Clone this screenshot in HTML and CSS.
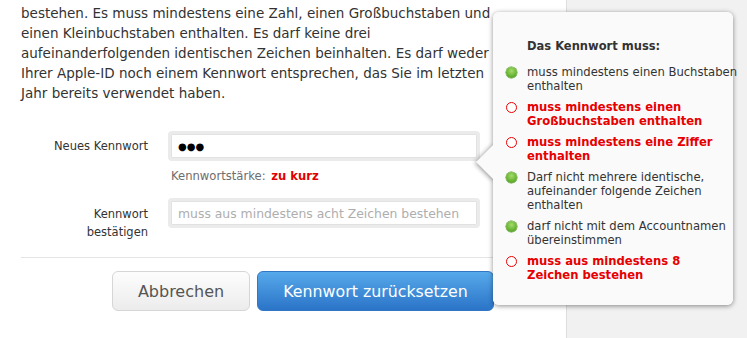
FILE: index.html
```html
<!DOCTYPE html>
<html lang="de">
<head>
<meta charset="utf-8">
<title>Kennwort zurücksetzen</title>
<link rel="stylesheet" href="styles.css">
</head>
<body>
<div class="page">
  <main class="main">
    <p class="intro">bestehen. Es muss mindestens eine Zahl, einen Großbuchstaben und<br>einen Kleinbuchstaben enthalten. Es darf keine drei<br>aufeinanderfolgenden identischen Zeichen beinhalten. Es darf weder<br>Ihrer Apple-ID noch einem Kennwort entsprechen, das Sie im letzten<br>Jahr bereits verwendet haben.</p>

    <div class="form">
      <div class="row row-new">
        <label class="label" for="pw">Neues Kennwort</label>
        <div class="field">
          <div class="input"><span class="dots">●●●</span></div>
          <div class="strength">Kennwortstärke: <b>zu kurz</b></div>
        </div>
      </div>
      <div class="row row-confirm">
        <label class="label" for="pw2">Kennwort<br>bestätigen</label>
        <div class="field">
          <div class="input"><span class="placeholder">muss aus mindestens acht Zeichen bestehen</span></div>
        </div>
      </div>
    </div>

    <div class="divider"></div>

    <div class="actions">
      <button class="btn btn-cancel">Abbrechen</button>
      <button class="btn btn-primary">Kennwort zurücksetzen</button>
    </div>
  </main>
  <aside class="side"></aside>

  <div class="popover">
    <div class="arrow"></div>
    <div class="pop-body">
      <div class="pop-title">Das Kennwort muss:</div>
      <ul class="rules">
        <li class="ok"><span class="dot"></span><span>muss mindestens einen Buchstaben<br>enthalten</span></li>
        <li class="bad"><span class="dot"></span><span>muss mindestens einen<br>Großbuchstaben enthalten</span></li>
        <li class="bad"><span class="dot"></span><span>muss mindestens eine Ziffer<br>enthalten</span></li>
        <li class="ok"><span class="dot"></span><span>Darf nicht mehrere identische,<br>aufeinander folgende Zeichen<br>enthalten</span></li>
        <li class="ok"><span class="dot"></span><span>darf nicht mit dem Accountnamen<br>übereinstimmen</span></li>
        <li class="bad"><span class="dot"></span><span>muss aus mindestens 8<br>Zeichen bestehen</span></li>
      </ul>
    </div>
  </div>
</div>
</body>
</html>
```

FILE: styles.css
```css
* { box-sizing: border-box; }
html, body {
  margin: 0;
  padding: 0;
  background: #fff;
  font-family: "DejaVu Sans", "Liberation Sans", sans-serif;
  color: #333;
}
.page {
  position: relative;
  display: flex;
  width: 747px;
  height: 338px;
  overflow: hidden;
}
.main {
  width: 566px;
  flex: none;
  padding: 3px 0 0 21px;
}
.side {
  flex: 1;
  background: #f1f1f1;
  border-left: 1px solid #dedede;
}
.intro {
  margin: 0;
  font-size: 13.5px;
  line-height: 20px;
  white-space: nowrap;
  color: #333;
}
.form {
  margin-top: 28px;
}
.row {
  display: grid;
  grid-template-columns: 127px 312px;
  column-gap: 20px;
}
.label {
  text-align: right;
  font-size: 11.5px;
  line-height: 18px;
  color: #333;
}
.row-new .label { padding-top: 6px; }
.row-confirm { margin-top: 15px; }
.row-confirm .label { padding-top: 7px; }
.input {
  height: 30px;
  border: 3px solid #ebebeb;
  border-radius: 4px;
  background: #fff;
  box-shadow: inset 0 0 0 1px #e2e2e2;
  display: flex;
  align-items: center;
  padding-left: 7px;
}
.dots {
  font-size: 10px;
  color: #000;
}
.placeholder {
  font-size: 12.4px;
  color: #aeaeae;
}
.strength {
  margin-top: 8px;
  padding-left: 3px;
  font-size: 11.6px;
  color: #6d6d6d;
  line-height: 14px;
}
.strength b {
  color: #e10000;
  margin-left: 2px;
}
.divider {
  margin-top: 16px;
  height: 1px;
  background: #e4e4e4;
  width: 500px;
}
.actions {
  display: flex;
  gap: 7px;
  margin-top: 13px;
  padding-left: 91px;
}
.btn {
  font-family: inherit;
  height: 40px;
  border-radius: 6px;
  cursor: pointer;
}
.btn-cancel {
  width: 138px;
  background: linear-gradient(#fdfdfd, #ececec);
  border: 1px solid #d6d6d6;
  color: #555;
  font-size: 16px;
}
.btn-primary {
  width: 237px;
  background: linear-gradient(#56a9ea, #2b74c8);
  border: 1px solid #3177c4;
  color: #fff;
  font-size: 15.8px;
}
.popover {
  position: absolute;
  left: 493px;
  top: 12px;
  width: 240px;
  height: 293px;
  border-radius: 6px;
  background: #fafafa;
  box-shadow: 0 1px 5px rgba(0, 0, 0, 0.45);
  z-index: 2;
}
.arrow {
  position: absolute;
  left: -12px;
  top: 138px;
  width: 24px;
  height: 24px;
  background: #fafafa;
  transform: rotate(45deg);
  box-shadow: 0 1px 5px rgba(0, 0, 0, 0.45);
}
.pop-body {
  position: relative;
  height: 100%;
  border-radius: 6px;
  background: #fafafa;
  padding: 27px 0 0 13px;
}
.pop-title {
  font-size: 11.5px;
  font-weight: bold;
  line-height: 14px;
  padding-left: 21px;
  color: #333;
}
.rules {
  list-style: none;
  margin: 12px 0 0;
  padding: 0;
}
.rules li {
  display: flex;
  align-items: flex-start;
  font-size: 11.6px;
  line-height: 14px;
  white-space: nowrap;
  margin-bottom: 7px;
}
.rules li.bad {
  color: #e60000;
  font-weight: bold;
}
.rules .dot {
  flex: none;
  width: 11px;
  height: 11px;
  margin: 1.5px 10px 0 0;
  border-radius: 50%;
}
.rules li.ok .dot {
  background: radial-gradient(circle at 50% 35%, #a5dc6a 0%, #6bb536 55%, #4a9420 100%);
  box-shadow: 0 0 0 0.5px #5a9a2d;
}
.rules li.bad .dot {
  background: #fff;
  border: 1.3px solid #e60000;
}
```
